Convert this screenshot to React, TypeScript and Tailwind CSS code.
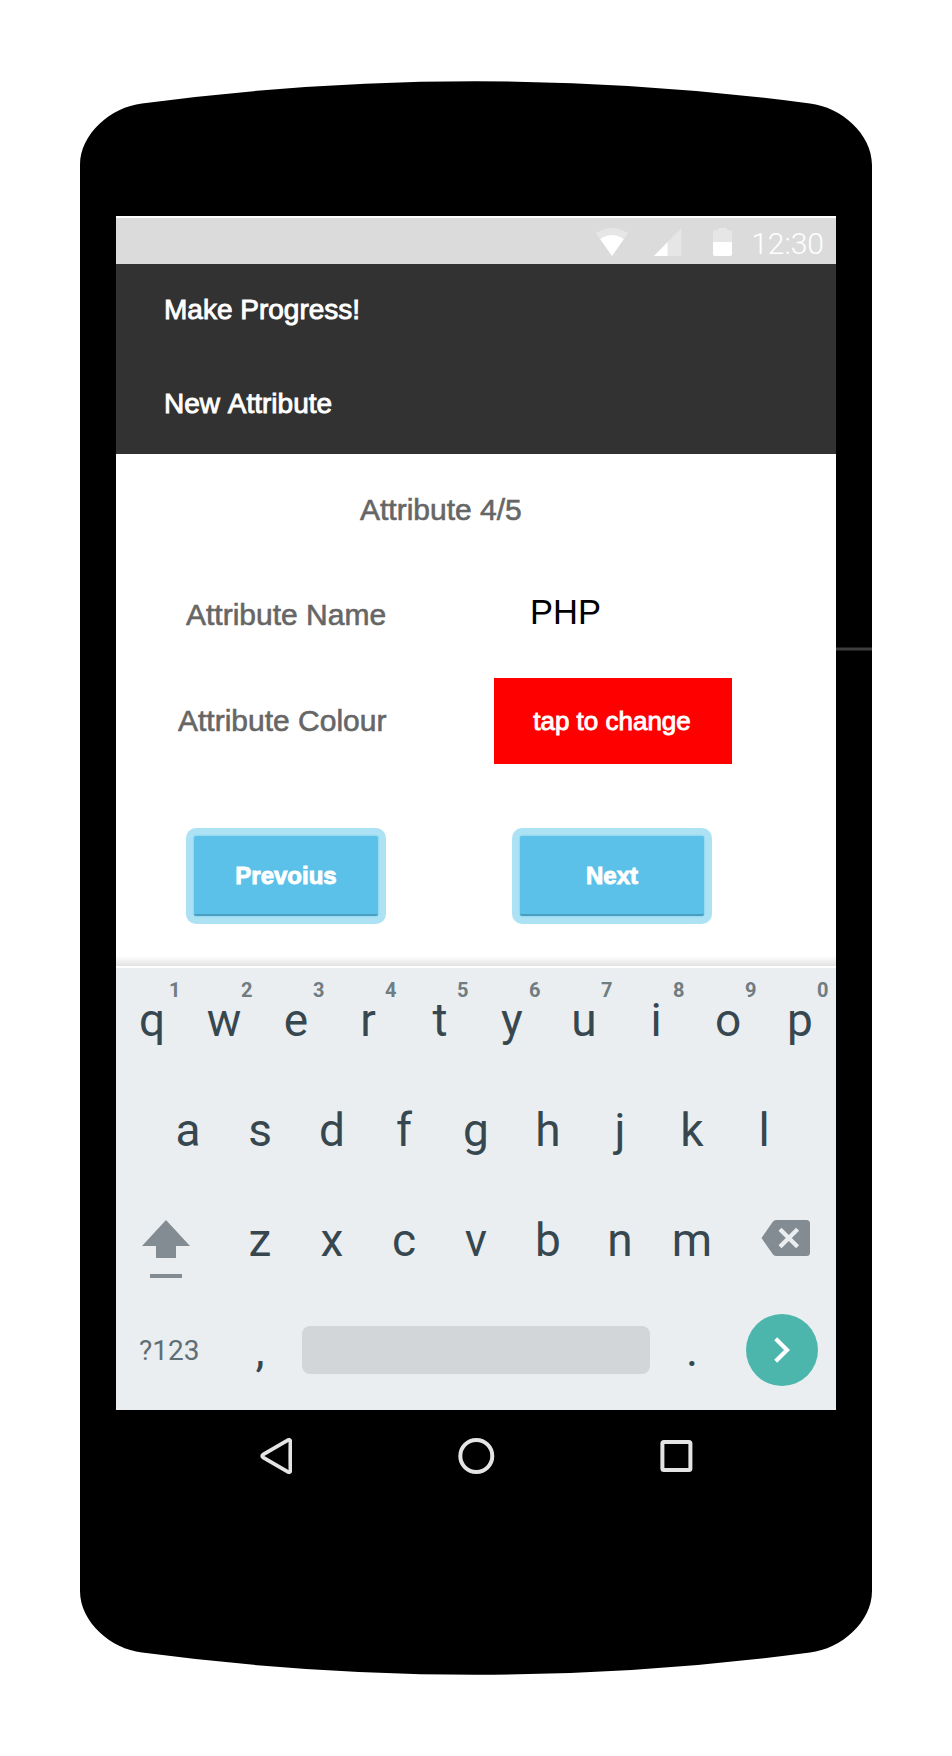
import React from "react";

function Key({ label, hint }: { label: string; hint?: string }) {
  return (
    <div className="relative h-12 w-[72px] text-center font-[Roboto,sans-serif] text-[46px] leading-[48px] text-[#37474f]">
      {label}
      {hint && (
        <span className="absolute top-[-18px] right-[7.5px] text-[20px] leading-6 font-bold text-[#6f7c81]">
          {hint}
        </span>
      )}
    </div>
  );
}

function StatusBar() {
  return (
    <div className="flex h-12 items-start justify-end border-t-2 border-white bg-[#dbdbdb] pr-3">
      <svg className="mt-[10px] h-7 w-8" viewBox="0 0 32 28">
        <path d="M0 5.3Q16 -5.3 32 5.3L16 28Z" fill="#e6e6e6" />
        <path d="M4.2 11.2Q16 3 27.8 11.2L16 28Z" fill="#fff" />
      </svg>
      <svg className="mt-[10px] ml-[26px] h-7 w-7" viewBox="0 0 28 28">
        <path d="M27.5 0V28H0Z" fill="#e6e6e6" />
        <path d="M13.5 14.2V28H0Z" fill="#fff" />
      </svg>
      <svg className="mt-[10px] ml-[31px] h-7 w-[19px]" viewBox="0 0 19 28">
        <path d="M5 0h9v2h3q2 0 2 2v10H0V4q0-2 2-2h3Z" fill="#e6e6e6" />
        <path d="M0 14h19v12q0 2-2 2H2q-2 0-2-2Z" fill="#fff" />
      </svg>
      <span className="mt-[6px] ml-[19px] font-[Roboto,sans-serif] text-[30px] leading-10 font-light text-white">
        12:30
      </span>
    </div>
  );
}

function WizardButton({ children }: { children: React.ReactNode }) {
  return (
    <button className="h-24 w-[200px] rounded-[10px] bg-[#ade2f4] p-2">
      <span className="flex h-20 w-full items-center justify-center rounded-[2px] border-b-2 border-[#4a9fc0] bg-[#5bc1e9] pt-[2px] text-[24px] leading-10 font-bold text-white shadow-[0_0_2px_#5bc1e9] [-webkit-text-stroke:0.9px_white]">
        {children}
      </span>
    </button>
  );
}

function Keyboard() {
  return (
    <div className="h-[444px] border-t-2 border-white bg-[#eaeef1]">
      <div className="flex h-[110px] items-center pb-[6px]">
        {"qwertyuiop".split("").map((c, i) => (
          <Key key={c} label={c} hint={String((i + 1) % 10)} />
        ))}
      </div>
      <div className="flex h-[110px] items-center justify-center pb-[6px]">
        {"asdfghjkl".split("").map((c) => (
          <Key key={c} label={c} />
        ))}
      </div>
      <div className="flex h-[110px] items-center pb-[6px]">
        <svg className="mt-[18px] ml-[26px] h-[58px] w-12" viewBox="0 0 48 58" fill="#848c93">
          <path d="M24 0L48 26H34V38H14V26H0Z" />
          <path d="M8 54h32v4.5H8Z" />
        </svg>
        <div className="ml-[34px] flex">
          {"zxcvbnm".split("").map((c) => (
            <Key key={c} label={c} />
          ))}
        </div>
        <svg className="-mt-1 ml-[33px] h-9 w-[49px]" viewBox="0 0 49 36">
          <path d="M15 0H45.5Q49 0 49 3.5V32.5Q49 36 45.5 36H15Q13 36 11.8 34.3L.5 18L11.8 1.7Q13 0 15 0Z" fill="#848c93" />
          <path d="M19 9.2L36.6 26.8M36.6 9.2L19 26.8" stroke="#eaeef1" strokeWidth="4.3" />
        </svg>
      </div>
      <div className="flex h-[110px] items-center pb-[6px]">
        <span className="w-[108px] pt-[2px] pl-[23px] font-[Roboto,sans-serif] text-[28px] leading-[48px] text-[#5f6e74]">
          ?123
        </span>
        <Key label="," />
        <div className="ml-[6px] h-12 w-[348px] rounded-lg bg-[#d2d6d9]" />
        <div className="ml-[6px]">
          <Key label="." />
        </div>
        <div className="ml-[18px] flex h-[72px] w-[72px] items-center justify-center rounded-full bg-[#4db6ac]">
          <svg className="h-[72px] w-[72px]" viewBox="0 0 72 72">
            <path d="M29.7 24.7L41 36L29.7 47.3" fill="none" stroke="#fff" strokeWidth="4.2" />
          </svg>
        </div>
      </div>
    </div>
  );
}

function NavBar() {
  return (
    <div className="flex items-center pt-7 pl-36">
      <svg className="h-9 w-8 shrink-0" viewBox="0 0 32 36" fill="none" stroke="#e4e4e4">
        <path d="M27.5 2.3Q30.5 .6 30.4 4.2Q30.1 18 30.4 31.8Q30.5 35.4 27.5 33.7L3.4 19.6Q.9 18 3.4 16.4Z" strokeWidth="3.7" />
      </svg>
      <svg className="ml-[166px] h-9 w-[37px] shrink-0" viewBox="0 0 37 36" fill="none" stroke="#e4e4e4" strokeWidth="4">
        <circle cx="18.3" cy="18" r="16" />
      </svg>
      <svg className="ml-[165px] h-8 w-[33px] shrink-0" viewBox="0 0 33 32" fill="none" stroke="#e4e4e4" strokeWidth="4">
        <rect x="2.4" y="2" width="28" height="28" rx="1.5" />
      </svg>
    </div>
  );
}

export default function App() {
  return (
    <div className="relative isolate h-[1756px] w-[952px] overflow-hidden bg-white font-['Liberation_Sans',Arial,sans-serif] [font-kerning:none]">
      <svg className="absolute inset-0 -z-10 h-[1756px] w-[952px]" viewBox="0 0 952 1756">
        <path
          d="M80 165C80 134 111 107 142 103.5Q309 81.3 476 81.3T810 103.5C841 107 872 134 872 165V1591C872 1622 841 1649 810 1652.5Q643 1674.7 476 1674.7T142 1652.5C111 1649 80 1622 80 1591Z"
          fill="#000"
        />
        <path d="M836 649H872" stroke="#3e3e3e" strokeWidth="3" />
      </svg>
      <main className="mx-auto w-[720px] pt-[216px]">
        <StatusBar />
        <header className="flex h-[190px] flex-col gap-[54px] bg-[#323232] pt-[26px] pl-12 text-[28px] leading-10 text-white [-webkit-text-stroke:0.9px_white]">
          <h1>Make Progress!</h1>
          <h2>New Attribute</h2>
        </header>
        <section className="h-[512px] bg-white pt-9 text-[30px] leading-10 text-[#666]">
          <p className="pl-[244px] [-webkit-text-stroke:0.6px_#666]">Attribute 4/5</p>
          <div className="mt-[60px] flex h-[88px] items-start">
            <span className="w-[414px] pt-[5px] pl-[70px] [-webkit-text-stroke:0.6px_#666]">Attribute Name</span>
            <span className="pt-[2px] text-[34.5px] text-black">PHP</span>
          </div>
          <div className="flex h-[86px] items-center">
            <span className="w-[378px] pl-[62px] [-webkit-text-stroke:0.6px_#666]">Attribute Colour</span>
            <button className="h-[86px] w-[238px] bg-[#ff0000] pr-[2px] text-[26px] leading-10 text-white [-webkit-text-stroke:0.9px_white]">
              tap to change
            </button>
          </div>
          <div className="mt-16 flex gap-[126px] pl-[70px]">
            <WizardButton>Prevoius</WizardButton>
            <WizardButton>Next</WizardButton>
          </div>
          <div className="mt-8 h-[10px] bg-linear-to-b from-white to-[#e2e2e2]" />
        </section>
        <Keyboard />
        <NavBar />
      </main>
    </div>
  );
}
